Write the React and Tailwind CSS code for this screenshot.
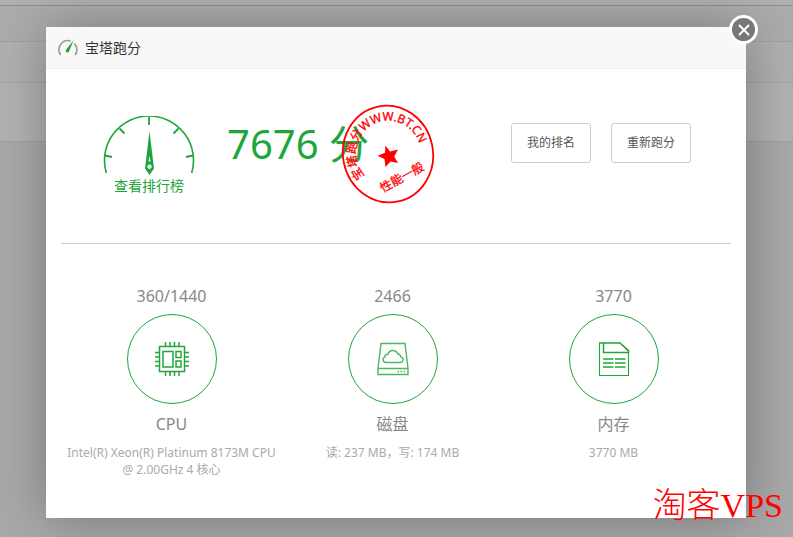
import { X } from "lucide-react";

function GaugeIcon() {
  return (
    <svg width="92" height="60" viewBox="0 0 92 60" fill="none" stroke="#20a53a">
      <path d="M3.3 57A44.5 44.5 0 1 1 88.7 57" strokeWidth="1.6" />
      <path
        d="M46 1v8M16.5 12.5l5 5M75.5 12.5l-5 5M2 39.5l7 1.5M90 39.5l-7 1.5"
        strokeWidth="1.8"
      />
      <path
        d="M46.5 15L42 52.5L46.5 59L51 52.5ZM46.5 48.5a2.2 2.2 0 1 0 .01 0ZM46.5 40l-1 5.500h2Z"
        fill="#20a53a"
        fillRule="evenodd"
        stroke="none"
      />
    </svg>
  );
}

function HeaderIcon() {
  return (
    <svg width="20" height="18" viewBox="0 0 20 18" fill="none">
      <path
        d="M2.8 16A9 9 0 0 1 12.6 2M16.4 4.6A9 9 0 0 1 17.2 16"
        stroke="#999"
        strokeWidth="1.6"
      />
      <path d="M15.6 1.2L8.2 10.6a1.7 1.7 0 1 0 2.9 1.7Z" fill="#20a53a" />
    </svg>
  );
}

function CpuIcon() {
  return (
    <svg width="34" height="34" viewBox="0 0 34 34" fill="none" stroke="#20a53a" strokeWidth="1.5">
      <rect x="4.5" y="4.5" width="25" height="25" />
      <rect x="8" y="9.5" width="10" height="15.5" />
      <rect x="21" y="9.5" width="5" height="6" />
      <rect x="21" y="19" width="5" height="6" />
      <path d="M10.5 0v4M15 0v4M19.5 0v4M24 0v4M10.5 30v4M15 30v4M19.5 30v4M24 30v4" />
      <path d="M0 10.5h4M0 15h4M0 19.5h4M0 24h4M30 10.5h4M30 15h4M30 19.5h4M30 24h4" />
    </svg>
  );
}

function DiskIcon() {
  return (
    <svg width="32" height="34" viewBox="0 0 32 34" fill="none" stroke="#4db661" strokeWidth="1.4">
      <path d="M4 1.5h24l3 25v6H1v-6ZM1 26.5h30" />
      <path d="M9 20.5h14c3.700 0 4.200-4.800.600-5.600c0-1.900-1.300-3-2.900-2.800c-1.400-4.700-8.200-5.200-10 .400c-2-.200-3.100.900-2.900 2.700c-2.800 1-2.200 5.300 1.200 5.300Z" />
      <path d="M20.500 29.500h1.500M23.500 29.500h1.500M26.500 29.500h1.500" />
    </svg>
  );
}

function MemoryIcon() {
  return (
    <svg width="32" height="34" viewBox="0 0 32 34" fill="none" stroke="#20a53a">
      <path d="M1.500 .700V33.500H30.500V8" strokeWidth="1.100" />
      <path d="M1 1h21l8.500 7.500v2H5.500V1M22 1l8.500 8" strokeWidth="1.500" />
      <path
        d="M5 17h10.500M17 17h10.500M5 21h10.500M17 21h10.500M5 25h10.500M17 25h10.500"
        strokeWidth="1.500"
      />
    </svg>
  );
}

function Stamp() {
  return (
    <svg
      className="absolute -top-3 left-[114px]"
      width="96"
      height="100"
      viewBox="0 0 96 100"
      fill="#f00"
      stroke="#f00"
    >
      <ellipse
        cx="47"
        cy="50"
        rx="45"
        ry="48.500"
        fill="none"
        strokeWidth="1.800"
        transform="rotate(-12 47 50)"
      />
      <path id="stamp-arc" d="M24 72A32.500 32.500 0 1 1 79 56" fill="none" stroke="none" />
      <text fontSize="12" strokeWidth="0.300">
        <textPath href="#stamp-arc">宝塔跑分WWW.BT.CN</textPath>
      </text>
      <path
        d="M44.500 41.500l4.500 6l8-2l-3.800 7l3.800 6.500l-7.500-1.500l-5 5.500l-1-8l-6.800-3.200l7.300-3Z"
        stroke="none"
      />
      <text
        fontSize="12"
        strokeWidth="0.300"
        textAnchor="middle"
        transform="translate(63 77) rotate(-29)"
      >
        性能一般
      </text>
    </svg>
  );
}

const results = [
  {
    name: "CPU",
    score: "360/1440",
    detail: "Intel(R) Xeon(R) Platinum 8173M CPU @ 2.00GHz 4 核心",
    Icon: CpuIcon,
  },
  { name: "磁盘", score: "2466", detail: "读: 237 MB，写: 174 MB", Icon: DiskIcon },
  { name: "内存", score: "3770", detail: "3770 MB", Icon: MemoryIcon },
];

export default function App() {
  return (
    <div className="relative min-h-screen overflow-hidden bg-[#a9a9a9] pt-[27px] pr-[47px] pb-[19px] pl-[46px] font-['Noto_Sans','Noto_Sans_CJK_SC',sans-serif]">
      {/* dimmed page behind the dialog */}
      <div className="absolute inset-x-0 top-0">
        <div className="h-[6px] border-b border-[#8f8f8f] bg-[#b0b0b0]" />
        <div className="h-9 border-b border-[#a2a2a2] bg-[#acacac]" />
        <div className="h-[41px] border-b border-[#a1a1a9] bg-[#b0b0b0]" />
        <div className="h-[59px] border-b border-[#a2a2a2] bg-[#b2b2b2]" />
      </div>

      <div
        role="dialog"
        aria-labelledby="dialog-title"
        className="relative bg-white shadow-[1px_1px_50px_rgba(0,0,0,0.3)]"
      >
        <header className="flex h-[42px] items-center gap-[7px] border-b border-[#eee] bg-[#f8f8f8] px-3">
          <HeaderIcon />
          <h1 id="dialog-title" className="text-sm text-[#333]">
            宝塔跑分
          </h1>
        </header>
        <button
          type="button"
          aria-label="关闭"
          className="absolute -top-3 -right-3 flex size-[29px] items-center justify-center rounded-full border-[3px] border-white bg-[#777] text-white"
        >
          <X size={18} strokeWidth={2.5} />
        </button>

        <div className="px-[15px]">
          <section className="flex h-[175px] items-start border-b border-[#ccc] pt-[47px] pr-10 pl-[42px]">
            <a href="#rank" className="flex flex-col items-center text-sm text-[#20a53a]">
              <GaugeIcon />
              <span>查看排行榜</span>
            </a>
            <div className="relative ml-8 pt-2">
              <p className="text-[40px] leading-10 whitespace-nowrap text-[#20a53a]">7676 分</p>
              <Stamp />
            </div>
            <div className="mt-[7px] ml-auto flex gap-5">
              <button type="button" className="h-10 w-20 rounded-[3px] border border-[#cbcbdb] text-xs text-[#555]">
                我的排名
              </button>
              <button type="button" className="h-10 w-20 rounded-[3px] border border-[#cbcbdb] text-xs text-[#555]">
                重新跑分
              </button>
            </div>
          </section>

          <section className="grid grid-cols-3 pt-10 pr-[7px] pb-10 text-center">
            {results.map(({ name, score, detail, Icon }) => (
              <div key={name} className="flex flex-col items-center">
                <p className="text-base leading-6 text-[#888]">{score}</p>
                <div className="mt-[6px] flex size-[90px] items-center justify-center rounded-full border border-[#20a53a]">
                  <Icon />
                </div>
                <h2 className="mt-2 text-base leading-6 text-[#888]">{name}</h2>
                <p className="mt-2 text-xs leading-[17px] text-[#aaa]">{detail}</p>
              </div>
            ))}
          </section>
        </div>
      </div>

      <p className="absolute right-[10px] bottom-[11px] font-['Liberation_Serif','Noto_Sans_CJK_SC',serif] text-[34px] leading-10 font-light text-[#f00]">
        淘客VPS
      </p>
    </div>
  );
}
